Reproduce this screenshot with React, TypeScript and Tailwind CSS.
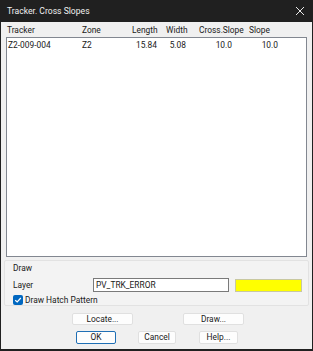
import React from "react";

const font = { fontFamily: 'Roboto, "Noto Sans", sans-serif' };

const btn = "h-[12px] bg-[#fdfdfd] border border-[#e0e0e0] rounded-[2px] flex items-center justify-center leading-none";

export default function App() {
  return (
    <div className="w-[313px] h-[351px] bg-[#202020] flex flex-col text-[8.4px] text-[#1a1a1a]" style={font}>
      <div className="h-[22px] flex items-center justify-between pl-[7px] pr-[6px] text-[#f0f0f0] text-[8.6px] shrink-0">
        <span>Tracker. Cross Slopes</span>
        <svg width="10" height="10" viewBox="0 0 10 10" className="mr-[2px]">
          <path d="M1 1 L9 9 M9 1 L1 9" stroke="#e8e8e8" strokeWidth="1" />
        </svg>
      </div>
      <div className="flex-1 mx-[1px] mb-[2px] bg-[#f0f0f0] flex flex-col">
        <div className="h-[14px] flex items-center pl-[6px] leading-none mt-[1px]">
          <span className="w-[75px]">Tracker</span>
          <span className="w-[50px]">Zone</span>
          <span className="w-[34px]">Length</span>
          <span className="w-[33px]">Width</span>
          <span className="w-[50px]">Cross.Slope</span>
          <span>Slope</span>
        </div>
        <div className="mx-[5px] h-[220px] bg-white border border-[#828790]">
          <div className="h-[12px] flex items-center leading-none mt-[1px] pl-[1px]">
            <span className="w-[74px]">Z2-009-004</span>
            <span className="w-[51px]">Z2</span>
            <span className="w-[24px] text-right">15.84</span>
            <span className="w-[29px] text-right">5.08</span>
            <span className="w-[46px] text-right">10.0</span>
            <span className="w-[46px] text-right">10.0</span>
          </div>
        </div>
        <div className="mx-[3px] mt-[3px] h-[46px] bg-[#f3f3f3] border border-[#e2e2e2] rounded-[2px] flex flex-col pl-[8px] leading-none">
          <div className="mt-[3px] h-[10px] flex items-center">Draw</div>
          <div className="mt-[6px] flex items-center h-[14px]">
            <span className="w-[80px]">Layer</span>
            <div className="w-[136px] h-[14px] bg-white border border-[#7a7a7a] flex items-center pl-[2px]">PV_TRK_ERROR</div>
            <div className="ml-[6px] w-[67px] h-[13px] bg-[#ffff00] border border-[#c8c8a0]" />
          </div>
          <div className="mt-[3px] flex items-center h-[11px]">
            <div className="w-[10px] h-[10px] rounded-[2px] bg-[#0067c0] flex items-center justify-center">
              <svg width="8" height="8" viewBox="0 0 8 8">
                <path d="M1.2 4.2 L3.2 6 L6.8 2" stroke="white" strokeWidth="1.2" fill="none" />
              </svg>
            </div>
            <span className="ml-[2px]">Draw Hatch Pattern</span>
          </div>
        </div>
        <div className="flex mt-[7px] h-[12px]">
          <div className={`ml-[71px] w-[61px] ${btn}`}>Locate...</div>
          <div className={`ml-[50px] w-[61px] ${btn}`}>Draw...</div>
        </div>
        <div className="flex mt-[6px] h-[13px]">
          <div className="ml-[75px] w-[40px] h-[13px] bg-[#fdfdfd] border border-[#1f6fb5] rounded-[2px] flex items-center justify-center leading-none">OK</div>
          <div className="ml-[22px] w-[38px] h-[13px] bg-[#fdfdfd] border border-[#e0e0e0] rounded-[2px] flex items-center justify-center leading-none">Cancel</div>
          <div className="ml-[23px] w-[39px] h-[13px] bg-[#fdfdfd] border border-[#e0e0e0] rounded-[2px] flex items-center justify-center leading-none">Help...</div>
        </div>
      </div>
    </div>
  );
}
